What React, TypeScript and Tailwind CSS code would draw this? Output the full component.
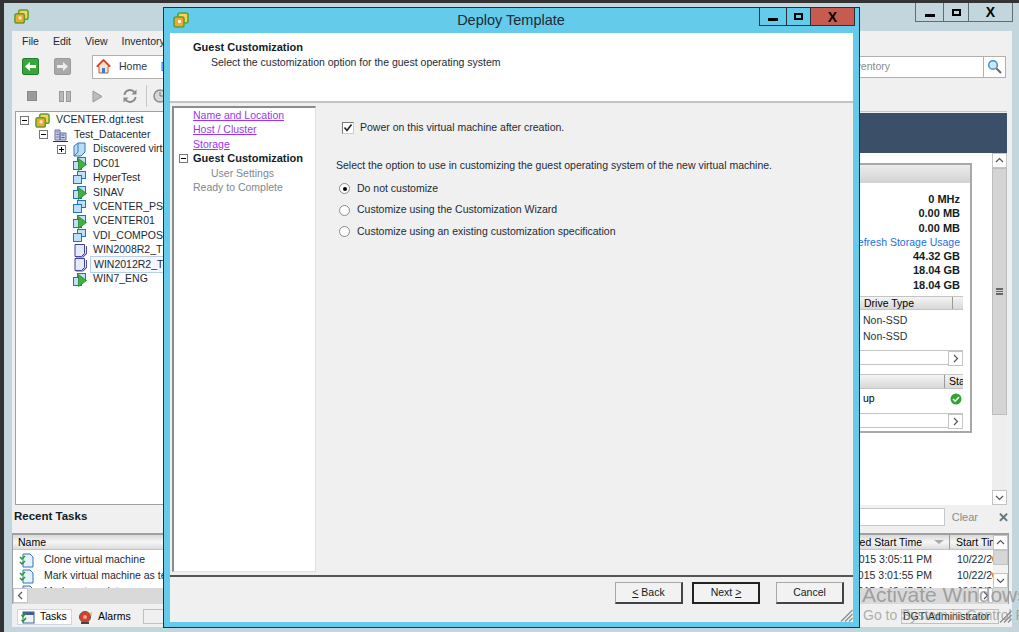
import { ReactNode } from "react";

const Logo = ({ size = 16 }: { size?: number }) => (
  <svg width={size} height={size} viewBox="0 0 16 16">
    <rect x="5" y="1" width="10" height="10" rx="2" fill="#f4d35e" stroke="#5f9e2e" strokeWidth="1.6" />
    <rect x="1" y="5" width="10" height="10" rx="2" fill="#f0a830" stroke="#5f9e2e" strokeWidth="1.6" />
    <path d="M5 8h3v3H5z" fill="#fff3c4" />
  </svg>
);

const VmIcon = ({ on }: { on?: boolean }) => (
  <svg width="15" height="15" viewBox="0 0 15 15">
    <rect x="5.500" y="1.500" width="8" height="7" fill="#bfe0f8" stroke="#2272c4" />
    <rect x="1.500" y="5.500" width="8" height="8" fill="#bfe0f8" stroke="#2272c4" />
    {on && <path d="M6.500 2.500 14.500 8.500 6.500 14.500z" fill="#3fb33f" stroke="#1f7a1f" strokeWidth="0.7" />}
  </svg>
);

const TemplateIcon = () => (
  <svg width="14" height="15" viewBox="0 0 14 15">
    <path d="M2 1.500h9.500v9l-3 3H2z" fill="#e4eaf8" stroke="#3b3f9a" />
    <path d="M3 14h7l3.500-3.500V3" fill="none" stroke="#5a4fb0" strokeWidth="1.200" />
  </svg>
);

const Expander = ({ open }: { open?: boolean }) => (
  <span className="w-[9px] h-[9px] border border-[#777] bg-white flex items-center justify-center relative shrink-0">
    <span className="w-[5px] h-px bg-black" />
    {!open && <span className="absolute w-px h-[5px] bg-black" />}
  </span>
);

const treeVms: { name: string; kind: "on" | "off" | "tpl"; selected?: boolean }[] = [
  { name: "DC01", kind: "on" },
  { name: "HyperTest", kind: "off" },
  { name: "SINAV", kind: "on" },
  { name: "VCENTER_PSC", kind: "off" },
  { name: "VCENTER01", kind: "on" },
  { name: "VDI_COMPOSER", kind: "off" },
  { name: "WIN2008R2_TEMPLATE", kind: "tpl" },
  { name: "WIN2012R2_TEMPLATE", kind: "tpl", selected: true },
  { name: "WIN7_ENG", kind: "on" },
];

const TreeRow = ({ pad, children }: { pad: number; children: ReactNode }) => (
  <div className="h-[14.45px] flex items-center whitespace-nowrap" style={{ paddingLeft: pad }}>
    {children}
  </div>
);

const Tree = () => (
  <div className="w-[300px] shrink-0 bg-white border border-[#a0a0a0] border-r-0 pt-[1px] text-[#1c2a36] overflow-hidden">
    <TreeRow pad={4}>
      <Expander open />
      <span className="ml-[6px] mr-[6px]"><Logo size={15} /></span>
      VCENTER.dgt.test
    </TreeRow>
    <TreeRow pad={23}>
      <Expander open />
      <svg className="ml-[5px] mr-[6px]" width="15" height="15" viewBox="0 0 15 15">
        <path d="M2 3h5v10H2zM7 6h6v7H7z" fill="#c9cfe8" stroke="#6d7399" />
        <path d="M3.500 5h2M3.500 7.500h2M3.500 10h2M8.500 8h3M8.500 10.500h3" stroke="#4d56a8" />
        <path d="M0 14.500h15" stroke="#333" />
      </svg>
      Test_Datacenter
    </TreeRow>
    <TreeRow pad={41}>
      <Expander />
      <svg className="ml-[6px] mr-[6px]" width="15" height="15" viewBox="0 0 15 15">
        <path d="M2 4 6 1h7v9l-4 4H2z" fill="#bcdcf5" stroke="#2c78c4" />
        <path d="M6 1v9l-4 4" fill="none" stroke="#2c78c4" />
      </svg>
      Discovered virtual machine
    </TreeRow>
    {treeVms.map((vm) => (
      <TreeRow key={vm.name} pad={56}>
        <span className="w-[15px] mr-[6px] flex justify-center">
          {vm.kind === "tpl" ? <TemplateIcon /> : <VmIcon on={vm.kind === "on"} />}
        </span>
        <span className={vm.selected ? "px-[3px] -ml-[3px] border border-[#b9d0e4] bg-[#f4f8fc]" : ""}>{vm.name}</span>
      </TreeRow>
    ))}
  </div>
);

const ScrollEnd = ({ children }: { children: ReactNode }) => (
  <span className="w-[15px] h-[15px] bg-white border border-[#c4c4c4] flex items-center justify-center text-[#555] shrink-0">
    {children}
  </span>
);

const Chev = ({ d }: { d: string }) => (
  <svg width="9" height="9" viewBox="0 0 9 9">
    <path d={d} fill="none" stroke="#555" strokeWidth="1.2" />
  </svg>
);

const ChevRight = () => <Chev d="M3 1l3.500 3.500L3 8" />;
const ChevLeft = () => <Chev d="M6 1 2.500 4.500 6 8" />;
const ChevUp = () => <Chev d="M1 6l3.500-3.500L8 6" />;
const ChevDown = () => <Chev d="M1 3l3.500 3.500L8 3" />;

const HScroll = () => (
  <div className="h-[15px] flex justify-end bg-white border border-[#c4c4c4] border-r-0">
    <ScrollEnd><ChevRight /></ScrollEnd>
  </div>
);

const stats = [
  { v: "0 MHz" },
  { v: "0.00 MB" },
  { v: "0.00 MB" },
  { v: "Refresh Storage Usage", link: true },
  { v: "44.32 GB" },
  { v: "18.04 GB" },
  { v: "18.04 GB" },
];

const SummaryPanel = () => (
  <div className="flex-1 flex flex-col border-t border-[#c8c8c8] pt-[1px] min-w-0 mr-[2px]">
    <div className="h-[40px] bg-[#3b5068] shrink-0" />
    <div className="flex-1 bg-white flex justify-between pl-[300px] min-h-0">
      <div className="w-[272px] mt-[10px] h-[270px] border-2 border-[#a8a8a8] bg-white flex flex-col ml-auto mr-[20px]">
        <div className="h-[18px] bg-gradient-to-b from-[#ececec] to-[#d2d2d2] shrink-0" />
        <div className="pt-[9px] pr-[10px] flex flex-col items-end">
          {stats.map((s, i) => (
            <div key={i} className={s.link ? "h-[14.3px] leading-[14px] text-[#1a6fe8]" : "h-[14.3px] leading-[14px] text-[11px] font-bold text-[#111c26]"}>
              {s.v}
            </div>
          ))}
        </div>
        <div className="mt-[4px] ml-[6px] mr-[7px] flex flex-col">
          <div className="h-[14px] flex justify-end bg-gradient-to-b from-[#f4f4f4] to-[#d8d8d8] border-y border-[#c4c4c4]">
            <span className="w-[91px] border-r border-[#999] pl-[2px] leading-[12px]">Drive Type</span>
            <span className="w-[10px]" />
          </div>
          <div className="h-[40px] pl-[155px] pt-[2px] leading-[16px] text-[#23313d]">
            <div>Non-SSD</div>
            <div>Non-SSD</div>
          </div>
          <HScroll />
          <div className="mt-[9px] h-[15px] flex justify-end bg-gradient-to-b from-[#f4f4f4] to-[#d8d8d8] border-y border-[#c4c4c4] overflow-hidden">
            <span className="w-[19px] border-l border-[#999] pl-[4px] leading-[13px] whitespace-nowrap">Sta</span>
          </div>
          <div className="h-[24px] pb-[5px] flex items-center justify-between pl-[155px] pr-[1px]">
            <span>up</span>
            <svg width="12" height="12" viewBox="0 0 12 12">
              <circle cx="6" cy="6" r="5.500" fill="#2fa52f" />
              <path d="M3 6l2.200 2.200L9 4" fill="none" stroke="#fff" strokeWidth="1.600" />
            </svg>
          </div>
          <HScroll />
        </div>
      </div>
      <div className="w-[15px] flex flex-col bg-[#eeeeee] shrink-0">
        <ScrollEnd><ChevUp /></ScrollEnd>
        <div className="h-[247px] bg-[#d4d4d4] border border-[#bdbdbd] flex items-center justify-center">
          <span className="w-[7px] h-[7px] border-y-2 border-[#666] relative flex items-center">
            <span className="w-full h-px bg-[#666]" />
          </span>
        </div>
        <div className="flex-1" />
        <ScrollEnd><ChevDown /></ScrollEnd>
      </div>
    </div>
  </div>
);

const TaskIcon = () => (
  <svg width="15" height="15" viewBox="0 0 15 15">
    <path d="M4 1h7l3 3v10H4z" fill="#e6f1fb" stroke="#3a70b0" />
    <path d="M1 4l2 2 3-3M1 9l2 2 3-3" fill="none" stroke="#1f9a2f" strokeWidth="1.500" />
  </svg>
);

const RecentTasks = () => (
  <div className="h-[71px] -ml-[3px] border border-[#a0a0a0] border-t-2 border-b-0 bg-white flex flex-col overflow-hidden">
    <div className="flex-1 flex min-h-0">
      <div className="flex-1 flex flex-col min-w-0">
        <div className="h-[15px] shrink-0 flex bg-gradient-to-b from-[#d8d8d8] via-[#f6f6f6] to-[#dcdcdc] border-b border-[#c4c4c4] leading-[14px]">
          <span className="pl-[5px] w-[838px] shrink-0">Name</span>
          <span className="w-[99px] shrink-0 border-r border-[#999] flex justify-end items-center pr-[5px] whitespace-nowrap">
            <span>Requested Start Time</span>
            <span className="ml-[12px] w-0 h-0 border-x-[5px] border-x-transparent border-t-[4px] border-t-[#aaa]" />
          </span>
          <span className="pl-[6px] whitespace-nowrap overflow-hidden flex-1">Start Time</span>
        </div>
        <div className="flex-1 overflow-hidden pt-[2px]">
          {[
            ["Clone virtual machine", "10/22/2015 3:05:11 PM", "10/22/2015"],
            ["Mark virtual machine as template", "10/22/2015 3:01:55 PM", "10/22/2015"],
            ["Mark as template", "10/22/2015 2:40:45 PM", "10/22/2015"],
          ].map(([n, a, b]) => (
            <div key={n} className="h-[16px] flex items-center whitespace-nowrap text-[#1c2a36]">
              <span className="w-[838px] flex items-center pl-[6px] gap-[10px] shrink-0">
                <TaskIcon />
                {n}
              </span>
              <span className="w-[99px] shrink-0 flex justify-end pr-[18px]">{a}</span>
              <span className="pl-[7px] overflow-hidden">{b}</span>
            </div>
          ))}
        </div>
      </div>
      <div className="w-[15px] flex flex-col shrink-0 bg-[#f2f2f2]">
        <ScrollEnd><ChevUp /></ScrollEnd>
        <div className="h-[15px] bg-[#d6d6d6] border border-[#c4c4c4]" />
        <div className="flex-1" />
        <ScrollEnd><ChevDown /></ScrollEnd>
      </div>
    </div>
    <div className="h-[16px] shrink-0 flex justify-between bg-[#d9d9d9] pr-[15px]">
      <ScrollEnd><ChevLeft /></ScrollEnd>
      <ScrollEnd><ChevRight /></ScrollEnd>
    </div>
  </div>
);

const ToolButton = ({ children }: { children: ReactNode }) => (
  <span className="w-[32.500px] flex justify-center">{children}</span>
);

const MainWindow = () => (
  <div className="h-full flex flex-col bg-[#c3d6dd]">
    <div className="h-[28px] shrink-0 flex justify-between pl-[10px] pr-[6px]">
      <span className="mt-[6px]"><Logo size={15} /></span>
      <div className="h-[19px] flex border border-t-0 border-[#5f6c73] text-black">
        <span className="w-[27px] flex items-end justify-center pb-[4px]"><span className="w-[10px] h-[3px] bg-black" /></span>
        <span className="w-[25px] border-l border-[#5f6c73] flex items-center justify-center"><span className="w-[9px] h-[7px] border-2 border-black" /></span>
        <span className="w-[44px] border-l border-[#5f6c73] flex items-center justify-center font-bold text-[14px] leading-none">X</span>
      </div>
    </div>
    <div className="ml-[8px] mr-[7px] h-[596px] bg-[#f0f0f0] flex flex-col px-[3px]">
      <div className="h-[19px] pt-[2px] shrink-0 flex items-center pl-[7px] gap-[14px] text-[#1c2a36]">
        <span>File</span><span>Edit</span><span>View</span><span>Inventory</span><span>Administration</span>
      </div>
      <div className="h-[25px] mt-[4px] shrink-0 flex items-center pl-[7px]">
        <span className="w-[17px] h-[17px] rounded-[2px] bg-[#3aa63a] border border-[#1f7f2a] flex items-center justify-center">
          <svg width="13" height="11" viewBox="0 0 13 11"><path d="M1 5.500 6 1v3h6v3H6v3z" fill="#fff" /></svg>
        </span>
        <span className="w-[17px] h-[17px] ml-[15px] rounded-[2px] bg-[#a9a9a9] border border-[#999] flex items-center justify-center">
          <svg width="13" height="11" viewBox="0 0 13 11"><path d="M12 5.500 7 1v3H1v3h6v3z" fill="#eee" /></svg>
        </span>
        <div className="ml-[21px] w-[400px] h-[24px] bg-white border border-[#b0b0b0] flex items-center pl-[3px] text-[#2a3844]">
          <svg width="15" height="15" viewBox="0 0 15 15">
            <path d="M7.500 1 1 7.500h2V14h9V7.500h2z" fill="#f2e6d0" stroke="#c9543a" />
            <path d="M1 7.500 7.500 1 14 7.500" fill="none" stroke="#d8432a" strokeWidth="1.800" />
            <path d="M6 9h3v5H6z" fill="#3f7fc0" />
          </svg>
          <span className="ml-[8px]">Home</span>
          <svg className="ml-[14px]" width="7" height="11" viewBox="0 0 7 11"><path d="M1 1l5 4.500L1 10z" fill="#bcdcf5" stroke="#2c78e4" /></svg>
        </div>
        <div className="ml-auto mr-[3px] flex h-[22px]">
          <div className="w-[200px] bg-white border border-[#b0b0b0] flex items-center justify-end pr-[93px] text-[#8a8a8a]">
            Search Inventory
          </div>
          <div className="w-[22px] bg-white border border-l-0 border-[#b0b0b0] flex items-center justify-center">
            <svg width="15" height="15" viewBox="0 0 15 15">
              <circle cx="6" cy="6" r="4.300" fill="#cfe8fa" stroke="#3f8fd0" strokeWidth="1.500" />
              <path d="M9.500 9.500 14 14" stroke="#666" strokeWidth="2" />
            </svg>
          </div>
        </div>
      </div>
      <div className="h-[22px] mt-[6px] shrink-0 flex items-center pl-[1px]">
        <ToolButton><span className="w-[10px] h-[10px] bg-[#9a9a9a] border border-[#888]" /></ToolButton>
        <ToolButton><span className="flex gap-[2px]"><span className="w-[5px] h-[11px] bg-[#b9b9b9] border border-[#999]" /><span className="w-[5px] h-[11px] bg-[#b9b9b9] border border-[#999]" /></span></ToolButton>
        <ToolButton><svg width="11" height="13" viewBox="0 0 11 13"><path d="M1 1l9 5.500L1 12z" fill="#bdbdbd" stroke="#999" /></svg></ToolButton>
        <ToolButton>
          <svg width="16" height="16" viewBox="0 0 16 16">
            <path d="M2.500 7A5.500 5.500 0 0 1 12.500 4.500" fill="none" stroke="#8a8a8a" strokeWidth="2" />
            <path d="M13.500 9A5.500 5.500 0 0 1 3.500 11.500" fill="none" stroke="#8a8a8a" strokeWidth="2" />
            <path d="M14.500 1.500v5h-5zM1.500 14.500v-5h5z" fill="#8a8a8a" />
          </svg>
        </ToolButton>
        <span className="w-px h-[22px] bg-[#c8c8c8]" />
        <span className="ml-[5px]">
          <svg width="16" height="16" viewBox="0 0 16 16">
            <circle cx="8" cy="8" r="6" fill="#d8d8d8" stroke="#8a8a8a" strokeWidth="1.500" />
            <path d="M8 4v4h3" fill="none" stroke="#777" />
          </svg>
        </span>
      </div>
      <div className="h-[394px] mt-[4px] shrink-0 flex">
        <Tree />
        <SummaryPanel />
      </div>
      <div className="h-[28px] pb-[4px] shrink-0 flex items-center justify-between -ml-[1px]">
        <span className="font-bold text-[11.500px] text-[#111c26]">Recent Tasks</span>
        <div className="flex items-center">
          <span className="w-[124px] h-[18px] bg-white border border-[#c8c8c8]" />
          <span className="ml-[7px] text-[11px] text-[#8a8a8a]">Clear</span>
          <span className="ml-[20px] text-[#64727c] font-bold text-[13px] leading-none">✕</span>
        </div>
      </div>
      <RecentTasks />
      <div className="h-[19px] mt-[2px] shrink-0 flex items-end justify-between -mx-[3px] pl-[5px]">
        <div className="flex items-center h-[17px]">
          <span className="h-[16px] w-[55px] bg-white border border-[#cdd8e0] flex items-center gap-[5px] pl-[3px]">
            <svg width="14" height="14" viewBox="0 0 14 14">
              <rect x="2" y="2" width="11" height="11" fill="#eef3f8" stroke="#41618a" />
              <path d="M2 2h11v3H2z" fill="#41618a" />
              <path d="M0.500 5l1.500 1.500L5 3M0.500 10l1.500 1.500L5 8" fill="none" stroke="#1f9a2f" strokeWidth="1.500" />
            </svg>
            Tasks
          </span>
          <span className="ml-[6px] flex items-center gap-[5px]">
            <svg width="15" height="14" viewBox="0 0 15 14">
              <circle cx="7" cy="7" r="5.500" fill="#d8402a" stroke="#5a5a5a" />
              <circle cx="7" cy="7" r="2" fill="#f0a090" />
              <path d="M3 13h8" stroke="#444" strokeWidth="2" />
              <path d="M13 2v4" stroke="#e0a020" />
            </svg>
            Alarms
          </span>
          <span className="ml-[12px] w-[120px] h-[15px] border border-[#c0c0c0]" />
        </div>
        <div className="flex h-[17px] items-center">
          <span className="h-[15px] w-[98px] border border-[#c0c0c0] bg-[#f0f0f0] leading-[13px] pl-[1px] text-[#111c26] whitespace-nowrap">DGT\Administrator</span>
          <Grip />
        </div>
      </div>
    </div>
  </div>
);

const Grip = () => (
  <svg width="13" height="13" viewBox="0 0 13 13">
    <path d="M12.500 1 1 12.500M12.500 5 5 12.500M12.500 9 9 12.500" stroke="#8a8a8a" strokeWidth="1.200" />
  </svg>
);

const navItems = [
  { label: "Name and Location", link: true },
  { label: "Host / Cluster", link: true },
  { label: "Storage", link: true },
];

const WizardNav = () => (
  <div className="w-[144px] ml-[2px] mt-[3px] mb-[3px] bg-white border-l-2 border-t-2 border-[#8c8c8c] border-r border-r-[#e0e0e0] border-b border-b-[#e0e0e0] shrink-0">
    {navItems.map((n) => (
      <div key={n.label} className="h-[14.45px] leading-[14px] pl-[19px] text-[#9a35f5] underline whitespace-nowrap">{n.label}</div>
    ))}
    <div className="h-[14.45px] flex items-center pl-[5px] text-[11px] font-bold text-[#111c26]">
      <span className="mr-[5px]"><Expander open /></span>
      Guest Customization
    </div>
    <div className="h-[14.45px] leading-[14px] pl-[37px] text-[#808890]">User Settings</div>
    <div className="h-[14.45px] leading-[14px] pl-[19px] text-[#808890]">Ready to Complete</div>
  </div>
);

const Radio = ({ label, checked }: { label: string; checked?: boolean }) => (
  <div className="h-[21.500px] flex items-center text-[#1c2a36]">
    <span className="w-[11px] h-[11px] ml-[3px] mr-[7px] rounded-full border border-[#8a8a8a] bg-white flex items-center justify-center shrink-0">
      {checked && <span className="w-[4px] h-[4px] rounded-full bg-black" />}
    </span>
    {label}
  </div>
);

const WizButton = ({ children, primary }: { children: ReactNode; primary?: boolean }) => (
  <button
    className={
      primary
        ? "w-[68px] h-[22px] bg-[#f2f2f2] border-2 border-[#222] text-[#111c26]"
        : "w-[68px] h-[22px] bg-[#f2f2f2] border border-[#a8a8a8] border-r-2 border-b-2 border-r-[#444] border-b-[#444] text-[#111c26]"
    }
  >
    {children}
  </button>
);

const Dialog = () => (
  <div className="absolute left-[163px] top-[7px] w-[697px] h-[621px] bg-[#65cbeb] border border-[#26323a] flex flex-col">
    <div className="h-[25px] shrink-0 relative flex items-center justify-center">
      <span className="absolute left-[9px] top-[4px]"><Logo /></span>
      <span className="text-[14.500px] text-[#1c2a36] pr-[1px]">Deploy Template</span>
      <div className="absolute right-[4px] top-0 h-[18px] flex border border-t-0 border-[#26323a]">
        <span className="w-[26px] flex items-end justify-center pb-[4px]"><span className="w-[10px] h-[3px] bg-black" /></span>
        <span className="w-[24px] border-l border-[#26323a] flex items-center justify-center"><span className="w-[9px] h-[7px] border-2 border-black" /></span>
        <span className="w-[44px] border-l border-[#26323a] bg-[#c75b50] flex items-center justify-center font-bold text-[14px] leading-none text-black">X</span>
      </div>
    </div>
    <div className="mx-[6px] h-[589px] bg-[#f0f0f0] flex flex-col">
      <div className="h-[70px] shrink-0 bg-white border-b-2 border-[#c4c4c4] pl-[23px] pt-[7px]">
        <div className="font-bold text-[11px] text-[#111c26] leading-[14px]">Guest Customization</div>
        <div className="pl-[18px] text-[#1c2a36] leading-[16px]">Select the customization option for the guest operating system</div>
      </div>
      <div className="flex-1 flex min-h-0">
        <WizardNav />
        <div className="flex-1 pl-[20px] pt-[18px]">
          <div className="h-[14px] flex items-center text-[#1c2a36]">
            <span className="w-[12px] h-[12px] ml-[6px] mr-[6px] bg-white border border-[#777] border-r-[#ccc] border-b-[#ccc] flex items-center justify-center">
              <svg width="10" height="10" viewBox="0 0 10 10"><path d="M1.500 4.500 4 7.500 8.500 1.500" fill="none" stroke="#222" strokeWidth="1.600" /></svg>
            </span>
            Power on this virtual machine after creation.
          </div>
          <div className="mt-[23px] h-[14px] leading-[14px] text-[#1c2a36]">Select the option to use in customizing the guest operating system of the new virtual machine.</div>
          <div className="mt-[6px]">
            <Radio label="Do not customize" checked />
            <Radio label="Customize using the Customization Wizard" />
            <Radio label="Customize using an existing customization specification" />
          </div>
        </div>
      </div>
      <div className="h-[47px] shrink-0 border-t-2 border-[#555] relative flex items-start justify-end pt-[5px] pr-[9px]">
        <span className="mr-[9px]"><WizButton><u>&lt;</u> Back</WizButton></span>
        <span className="mr-[16px]"><WizButton primary>Next <u>&gt;</u></WizButton></span>
        <WizButton>Cancel</WizButton>
        <span className="absolute right-0 bottom-0"><Grip /></span>
      </div>
    </div>
  </div>
);

export default function App() {
  return (
    <div className="relative w-[1019px] h-[632px] overflow-hidden bg-[#333333] pl-[4px] pt-[3px] text-[10.500px] font-['Liberation_Sans',sans-serif]">
      <MainWindow />
      <div className="absolute left-[862px] top-[581px] text-[21px] leading-[28px] text-[#8f8f8f]/80 whitespace-nowrap pointer-events-none">Activate Windows</div>
      <div className="absolute left-[863px] top-[606px] text-[14px] leading-[18px] text-[#8f8f8f]/70 whitespace-nowrap pointer-events-none">Go to System in Control Panel</div>
      <Dialog />
    </div>
  );
}
